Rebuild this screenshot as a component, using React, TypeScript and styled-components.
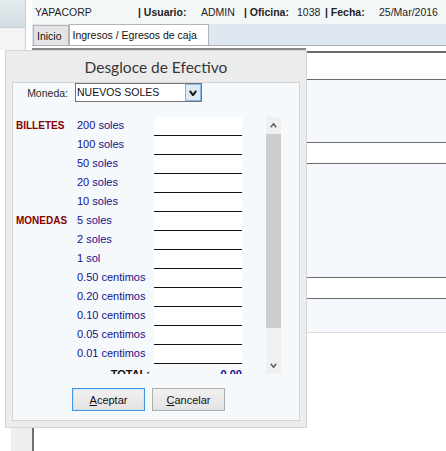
import React from 'react';
import styled, { createGlobalStyle } from 'styled-components';

const GlobalStyle = createGlobalStyle`
  html, body {
    margin: 0;
    padding: 0;
    background: #fff;
  }
  body {
    font-family: "Liberation Sans", Arial, sans-serif;
  }
`;

const Page = styled.div`
  position: relative;
  display: flex;
  width: 446px;
  height: 451px;
  overflow: hidden;
  background: #fff;
`;

/* left rail */
const Sidebar = styled.div`
  width: 32px;
  flex-shrink: 0;
  display: flex;
  flex-direction: column;
`;

const SideHeader = styled.div`
  width: 25px;
  height: 27px;
  background: linear-gradient(#e2eaed, #d3dee2);
  border-right: 1px solid #c5ced2;
  border-bottom: 1px solid #c5ced2;
`;

const SidePanel = styled.div`
  width: 25px;
  height: 22px;
  background: #f4f4f4;
  border-right: 1px solid #d2d2d2;
`;

const SideRail = styled.div`
  flex: 1;
  margin-left: 11px;
  background: #efefef;
`;

/* main area */
const Main = styled.div`
  flex: 1;
  min-width: 0;
  display: flex;
  flex-direction: column;
`;

const Header = styled.div`
  height: 24px;
  display: flex;
  align-items: center;
  padding-left: 3px;
  background: #f4f7f8;
  font-size: 10.5px;
  color: #1e1e1e;
  white-space: nowrap;
`;

const HeaderCell = styled.span<{ $w?: number; $bold?: boolean }>`
  flex-shrink: 0;
  width: ${(p) => (p.$w ? `${p.$w}px` : 'auto')};
  font-weight: ${(p) => (p.$bold ? 700 : 400)};
`;

const TabStrip = styled.div`
  height: 21px;
  display: flex;
  align-items: flex-end;
  padding-left: 1px;
  background: #dfe8f0;
  border-bottom: 1px solid #a9b2ba;
`;

const Tab = styled.div<{ $active?: boolean }>`
  box-sizing: border-box;
  height: ${(p) => (p.$active ? 21 : 20)}px;
  padding: 0 ${(p) => (p.$active ? 11 : 6)}px 0 3px;
  display: flex;
  align-items: center;
  font-size: 10.5px;
  color: #111;
  background: ${(p) => (p.$active ? '#fff' : '#e4e4e4')};
  border: 1px solid #b4b4b4;
  border-bottom: none;
`;

const TopRule = styled.div`
  margin-top: 2px;
  width: 274px;
  height: 2px;
  background: #8a8a8a;
`;

const Content = styled.div`
  flex: 1;
  margin-top: 1px;
  border-left: 2px solid #6f6f6f;
  border-top: 2px solid #6c6c6c;
  display: flex;
  flex-direction: column;
`;

const GridBand = styled.div<{ $h: number; $blue?: boolean; $light?: boolean }>`
  height: ${(p) => p.$h}px;
  background: ${(p) => (p.$blue ? '#f5f9fd' : '#fff')};
  border-bottom: 1px solid ${(p) => (p.$light ? '#d9d9d9' : '#6c6c6c')};
`;

/* modal dialog */
const Dialog = styled.div`
  position: absolute;
  left: 5px;
  top: 50px;
  box-sizing: border-box;
  width: 302px;
  height: 378px;
  display: flex;
  flex-direction: column;
  background: #ececec;
  border: 1px solid #d5d5d5;
`;

const Title = styled.div`
  height: 30px;
  display: flex;
  align-items: center;
  justify-content: center;
  padding-top: 1px;
  font-family: Lato, "Open Sans", sans-serif;
  font-size: 15.5px;
  color: #363636;
`;

const Body = styled.div`
  flex: 1;
  margin: 0 6px 6px;
  display: flex;
  flex-direction: column;
  background: #f6f9fc;
  border: 1px solid #d3d3d3;
`;

const MonedaRow = styled.div`
  display: flex;
  align-items: center;
  height: 19px;
`;

const FieldLabel = styled.span`
  width: 55px;
  margin-right: 7px;
  text-align: right;
  font-size: 10.5px;
  color: #2a2a2a;
`;

const Select = styled.div`
  box-sizing: border-box;
  width: 127px;
  height: 19px;
  display: flex;
  border: 1px solid #767676;
  background: #fff;
`;

const SelectValue = styled.span`
  flex: 1;
  padding-left: 1px;
  font-size: 10.5px;
  line-height: 17px;
  color: #111;
`;

const SelectButton = styled.span`
  box-sizing: border-box;
  width: 16px;
  display: flex;
  align-items: center;
  justify-content: center;
  background: #dce9f6;
  border: 1px solid #86b6e6;
`;

const ScrollBox = styled.div`
  margin-top: 15px;
  height: 257px;
  display: flex;
  padding-left: 3px;
`;

const Viewport = styled.div`
  width: 250px;
  overflow: hidden;
`;

const DenomGrid = styled.div`
  display: grid;
  grid-template-columns: 61px 77px 88px;
  grid-auto-rows: 19px;
`;

const Category = styled.span`
  font-size: 10px;
  font-weight: 700;
  color: #860000;
  line-height: 17px;
`;

const Denom = styled.span`
  font-size: 11px;
  color: #12128a;
  line-height: 17px;
`;

const Amount = styled.input`
  box-sizing: border-box;
  width: 88px;
  height: 19px;
  margin: 0;
  padding: 0 2px;
  border: none;
  border-bottom: 1px solid #111;
  background: #fff;
  outline: none;
  font: 11px "Liberation Sans", Arial, sans-serif;
`;

const TotalLabel = styled.span`
  padding: 2px 4px 0 0;
  text-align: right;
  font-size: 11px;
  font-weight: 700;
  color: #111;
  line-height: 17px;
`;

const TotalValue = styled.span`
  padding-top: 2px;
  text-align: right;
  font-size: 11px;
  font-weight: 700;
  color: #12128a;
  line-height: 17px;
`;

const ScrollTrack = styled.div`
  width: 15px;
  display: flex;
  flex-direction: column;
  background: #f0f0f0;
`;

const ScrollArrow = styled.div`
  height: 17px;
  display: flex;
  align-items: center;
  justify-content: center;
`;

const ScrollThumb = styled.div`
  height: 194px;
  background: #cdcdcd;
`;

const ScrollGap = styled.div`
  flex: 1;
`;

const ButtonRow = styled.div`
  display: flex;
  gap: 7px;
  margin-top: 14px;
  padding-left: 59px;
`;

const Button = styled.button<{ $primary?: boolean }>`
  box-sizing: border-box;
  width: 73px;
  height: 23px;
  padding: 0;
  font: 11px "Liberation Sans", Arial, sans-serif;
  color: #111;
  background: linear-gradient(#f1f1f1, #e3e3e3);
  border: 1px solid ${(p) => (p.$primary ? '#3f95e6' : '#adadad')};
  box-shadow: ${(p) => (p.$primary ? 'inset 0 0 0 1px #cfe4f8' : 'none')};
`;

const Mnemonic = styled.span`
  text-decoration: underline;
`;

const Chevron = ({ down, color, w = 7, h = 5, sw = 1.6 }: { down?: boolean; color: string; w?: number; h?: number; sw?: number }) => (
  <svg width={w} height={h} viewBox={`0 0 ${w} ${h}`}>
    <polyline
      points={down ? `0.8,0.8 ${w / 2},${h - 0.8} ${w - 0.8},0.8` : `0.8,${h - 0.8} ${w / 2},0.8 ${w - 0.8},${h - 0.8}`}
      fill="none"
      stroke={color}
      strokeWidth={sw}
    />
  </svg>
);

const denominations: { category?: string; label: string }[] = [
  { category: 'BILLETES', label: '200 soles' },
  { label: '100 soles' },
  { label: '50 soles' },
  { label: '20 soles' },
  { label: '10 soles' },
  { category: 'MONEDAS', label: '5 soles' },
  { label: '2 soles' },
  { label: '1 sol' },
  { label: '0.50 centimos' },
  { label: '0.20 centimos' },
  { label: '0.10 centimos' },
  { label: '0.05 centimos' },
  { label: '0.01 centimos' },
];

const bands = [
  { h: 26 },
  { h: 62, blue: true },
  { h: 20 },
  { h: 113, blue: true },
  { h: 20 },
  { h: 33, blue: true, light: true },
];

const App = () => {
  return (
    <>
      <GlobalStyle />
      <Page>
        <Sidebar>
          <SideHeader />
          <SidePanel />
          <SideRail />
        </Sidebar>

        <Main>
          <Header>
            <HeaderCell $w={103}>YAPACORP</HeaderCell>
            <HeaderCell $w={63} $bold>| Usuario:</HeaderCell>
            <HeaderCell $w={43}>ADMIN</HeaderCell>
            <HeaderCell $w={53} $bold>| Oficina:</HeaderCell>
            <HeaderCell $w={28}>1038</HeaderCell>
            <HeaderCell $w={54} $bold>| Fecha:</HeaderCell>
            <HeaderCell>25/Mar/2016</HeaderCell>
          </Header>
          <TabStrip>
            <Tab>Inicio</Tab>
            <Tab $active>Ingresos / Egresos de caja</Tab>
          </TabStrip>
          <TopRule />
          <Content>
            {bands.map((b, i) => (
              <GridBand key={i} $h={b.h} $blue={b.blue} $light={b.light} />
            ))}
          </Content>
        </Main>

        <Dialog>
          <Title>Desgloce de Efectivo</Title>
          <Body>
            <MonedaRow>
              <FieldLabel>Moneda:</FieldLabel>
              <Select>
                <SelectValue>NUEVOS SOLES</SelectValue>
                <SelectButton>
                  <Chevron down color="#1a1a1a" w={8} h={6} sw={2} />
                </SelectButton>
              </Select>
            </MonedaRow>

            <ScrollBox>
              <Viewport>
                <DenomGrid>
                  {denominations.map((d) => (
                    <React.Fragment key={d.label}>
                      <Category>{d.category ?? ''}</Category>
                      <Denom>{d.label}</Denom>
                      <Amount readOnly defaultValue="" />
                    </React.Fragment>
                  ))}
                  <span />
                  <TotalLabel>TOTAL:</TotalLabel>
                  <TotalValue>0.00</TotalValue>
                </DenomGrid>
              </Viewport>
              <ScrollTrack>
                <ScrollArrow>
                  <Chevron color="#606060" />
                </ScrollArrow>
                <ScrollThumb />
                <ScrollGap />
                <ScrollArrow>
                  <Chevron down color="#606060" />
                </ScrollArrow>
              </ScrollTrack>
            </ScrollBox>

            <ButtonRow>
              <Button $primary>
                <Mnemonic>A</Mnemonic>ceptar
              </Button>
              <Button>
                <Mnemonic>C</Mnemonic>ancelar
              </Button>
            </ButtonRow>
          </Body>
        </Dialog>
      </Page>
    </>
  );
};

export default App;
